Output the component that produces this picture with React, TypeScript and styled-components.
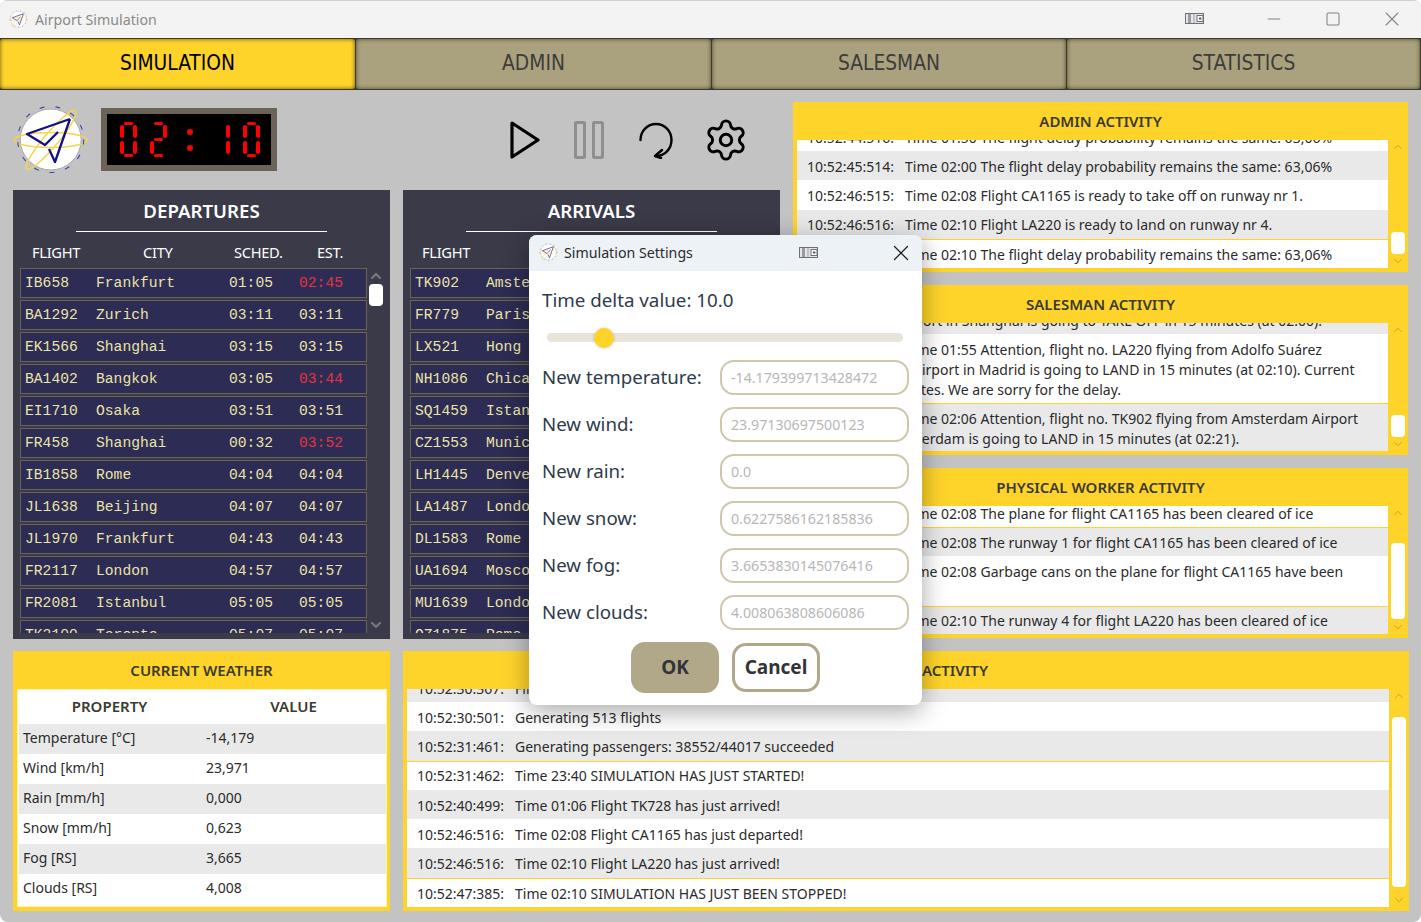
import * as React from 'react';
import styled, { createGlobalStyle } from 'styled-components';
import { ChevronUp, ChevronDown, Settings, X, Minus, Square } from 'lucide-react';

const YELLOW = '#ffd42a';
const TAN = '#aaa27e';
const UI_FONT = '"Noto Sans", "Open Sans", sans-serif';

const GlobalStyle = createGlobalStyle`
  html, body {
    margin: 0;
    padding: 0;
    background: #fff;
    font-family: ${UI_FONT};
  }
`;

const Page = styled.div`
  position: relative;
  width: 1421px;
  height: 922px;
  overflow: hidden;
  box-sizing: border-box;
  background: #c3c3c3;
  border-radius: 8px;
  display: flex;
  flex-direction: column;
`;

/* title bar */
const TitleBar = styled.div`
  height: 38px;
  flex: none;
  display: flex;
  align-items: center;
  background: #f3f3f3;
  border-top: 1px solid #cfcfcf;
  box-sizing: border-box;
  padding: 0 0 1px 8px;
  color: #8a8a8a;
  font-size: 14.2px;
`;
const TitleText = styled.span`
  margin-left: 4px;
  flex: 1;
`;
const WindowButton = styled.span<{ $gap?: number }>`
  width: 59px;
  margin-right: ${p => p.$gap || 0}px;
  display: flex;
  justify-content: center;
  align-items: center;
  color: #858585;
`;

/* tabs */
const TabBar = styled.div`
  height: 52px;
  flex: none;
  display: grid;
  grid-template-columns: 356px 356px 355px 354px;
  background: #3d3a2c;
`;
const Tab = styled.div<{ $active?: boolean }>`
  display: flex;
  align-items: center;
  justify-content: center;
  margin: 1px 1px 1px 0;
  padding-bottom: 3px;
  font-family: "DejaVu Sans Condensed", "DejaVu Sans", sans-serif;
  font-stretch: condensed;
  font-size: 20.8px;
  border-radius: 3px;
  color: ${p => (p.$active ? '#000' : '#3c3c3c')};
  background: ${p => (p.$active ? YELLOW : TAN)};
  box-shadow: inset 0 0 4px rgba(40, 36, 20, 0.75);
`;

/* main layout */
const Content = styled.div`
  flex: 1;
  min-height: 0;
  display: flex;
  flex-direction: column;
  gap: 12px;
  padding: 12px 12px 11px 13px;
`;
const TopSection = styled.div`
  height: 537px;
  flex: none;
  display: flex;
  gap: 13px;
`;
const LeftColumn = styled.div`
  width: 767px;
  flex: none;
  display: flex;
  flex-direction: column;
`;
const RightColumn = styled.div`
  flex: 1;
  min-width: 0;
  margin-right: 1px;
  display: grid;
  grid-template-rows: repeat(3, 170px);
  grid-template-columns: minmax(0, 1fr);
  gap: 13px;
`;
const BottomSection = styled.div`
  flex: 1;
  min-height: 0;
  display: flex;
  gap: 13px;
`;

/* toolbar */
const Toolbar = styled.div`
  height: 88px;
  flex: none;
  display: flex;
  align-items: flex-start;
  padding-top: 6px;
  box-sizing: border-box;
`;
const ToolbarLogo = styled.div`
  margin: -8px 1px 0 -3px;
  display: flex;
`;
const Clock = styled.div`
  width: 176px;
  height: 63px;
  box-sizing: border-box;
  border: 6px solid #6b6357;
  background: #000;
  display: flex;
  align-items: center;
  padding-left: 13px;
  gap: 13px;
`;
const DigitGrid = styled.div`
  width: 17px;
  height: 35px;
  display: grid;
  grid-template-columns: 4px 9px 4px;
  grid-template-rows: 3px 13px 3px 13px 3px;
`;
const Segment = styled.i<{ $area: string }>`
  grid-area: ${p => p.$area};
  background: #ff0000;
  border-radius: 2px;
`;
const ClockColon = styled.div`
  width: 20px;
  height: 22px;
  display: flex;
  flex-direction: column;
  justify-content: space-between;
  align-items: center;
`;
const ClockDot = styled.i`
  width: 6px;
  height: 6px;
  border-radius: 50%;
  background: #ff0000;
`;
const Controls = styled.div`
  margin-left: 233px;
  margin-top: 10px;
  display: flex;
  align-items: center;
  gap: 34px;
`;
const ControlButton = styled.div<{ $width: number; $faded?: boolean }>`
  width: ${p => p.$width}px;
  height: 44px;
  display: flex;
  align-items: center;
  justify-content: center;
  color: ${p => (p.$faded ? '#8f8f8f' : '#000')};
`;

/* boards */
const Boards = styled.div`
  flex: 1;
  min-height: 0;
  display: flex;
  gap: 13px;
`;
const Board = styled.section`
  width: 377px;
  flex: none;
  height: 449px;
  background: #3a3a48;
  color: #fff;
  display: flex;
  flex-direction: column;
  overflow: hidden;
`;
const BoardTitle = styled.h2`
  margin: 0 auto;
  width: 251px;
  height: 42px;
  box-sizing: border-box;
  border-bottom: 1px solid #fff;
  text-align: center;
  font-size: 18.67px;
  font-weight: 600;
  line-height: 42px;
`;
const BoardHeader = styled.div`
  height: 36px;
  flex: none;
  box-sizing: border-box;
  padding: 4px 0 0 19px;
  display: grid;
  grid-template-columns: 111px 91px 83px 1fr;
  align-items: center;
  font-size: 14.67px;
  letter-spacing: -0.3px;
`;
const BoardBody = styled.div`
  flex: 1;
  min-height: 0;
  display: flex;
  padding: 0 7px 6px 7px;
`;
const FlightList = styled.div`
  width: 347px;
  flex: none;
  overflow: hidden;
  display: flex;
  flex-direction: column;
  gap: 2px;
`;
const FlightRow = styled.div`
  height: 30px;
  flex: none;
  box-sizing: border-box;
  border: 1px solid #6a6450;
  background: #2c2c54;
  display: grid;
  grid-template-columns: 71px 133px 70px 1fr;
  align-items: center;
  padding-left: 4px;
  font-family: "Liberation Mono", monospace;
  font-size: 14.67px;
  color: #ece3a6;
  white-space: nowrap;
`;
const LateTime = styled.span`
  color: #e8343f;
`;

/* activity panels */
const Panel = styled.section<{ $width?: number }>`
  background: ${YELLOW};
  box-sizing: border-box;
  display: flex;
  flex-direction: column;
  padding: 0 0 4px 4px;
  min-height: 0;
  min-width: 0;
  ${p => (p.$width ? `width: ${p.$width}px; flex: none;` : 'flex: 1;')}
`;
const PanelTitle = styled.h3`
  margin: 0 4px 0 0;
  height: 38px;
  flex: none;
  text-align: center;
  line-height: 38px;
  font-size: 15px;
  font-weight: 600;
  color: #3a3a30;
`;
const PanelBody = styled.div`
  flex: 1;
  min-height: 0;
  display: flex;
`;
const LogList = styled.div<{ $shift: number }>`
  flex: 1;
  min-width: 0;
  overflow: hidden;
  background: #fff;
  & > :first-child {
    margin-top: ${p => -p.$shift}px;
  }
`;
const LogRow = styled.div<{ $alt?: boolean; $mark?: boolean }>`
  display: grid;
  grid-template-columns: 98px 1fr;
  padding: 4.8px 0 3.5px 10px;
  background: ${p => (p.$alt ? '#e9e9e9' : '#fff')};
  border-top: 1px solid ${p => (p.$mark ? YELLOW : 'transparent')};
  font-size: 14px;
  line-height: 20px;
  color: #2b2b2b;
  white-space: nowrap;
`;
const LogLine = styled.span<{ $indent?: number }>`
  display: block;
  margin-left: ${p => p.$indent || 0}px;
`;

/* scroll bars */
const Rail = styled.div<{ $dark?: boolean }>`
  width: 20px;
  flex: none;
  display: flex;
  flex-direction: column;
  align-items: center;
  color: ${p => (p.$dark ? '#77777c' : '#bd9f35')};
  ${p => (p.$dark ? 'margin-left: -1px;' : '')}
`;
const Track = styled.div`
  flex: 1;
  min-height: 0;
  width: 14px;
`;
const Thumb = styled.div<{ $top: number; $height: number }>`
  margin-top: ${p => p.$top}px;
  height: ${p => p.$height}px;
  background: #fff;
  border-radius: 4px;
`;

/* weather table */
const WeatherBox = styled.div`
  flex: 1;
  margin-right: 3px;
  background: #fff;
  border: 1px solid #fff2b8;
  display: flex;
  flex-direction: column;
  min-height: 0;
`;
const WeatherHead = styled.div`
  height: 34px;
  flex: none;
  box-sizing: border-box;
  padding-bottom: 2px;
  display: grid;
  grid-template-columns: 183px 1fr;
  align-items: center;
  text-align: center;
  font-size: 15px;
  font-weight: 600;
  color: #3a3a30;
`;
const WeatherRow = styled.div<{ $alt?: boolean }>`
  height: 30px;
  flex: none;
  box-sizing: border-box;
  margin-left: 1px;
  padding: 0 0 4px 4px;
  display: grid;
  grid-template-columns: 183px 1fr;
  align-items: center;
  background: ${p => (p.$alt ? '#e9e9e9' : '#fff')};
  font-size: 14px;
  color: #2b2b2b;
`;

/* settings dialog */
const Dialog = styled.div`
  position: absolute;
  left: 529px;
  top: 235px;
  width: 393px;
  height: 470px;
  background: #fff;
  border-radius: 8px;
  box-shadow: 0 6px 26px rgba(0, 0, 0, 0.35);
  display: flex;
  flex-direction: column;
  overflow: hidden;
`;
const DialogBar = styled.div`
  height: 36px;
  flex: none;
  box-sizing: border-box;
  display: flex;
  align-items: center;
  padding: 0 8px 1px 9px;
  background: #edf2f7;
  font-size: 14.2px;
  color: #2b2b2b;
`;
const DialogTitle = styled.span`
  margin-left: 3px;
  width: 235px;
`;
const DialogClose = styled.span`
  margin-left: auto;
  display: flex;
  color: #222;
`;
const DialogBody = styled.div`
  flex: 1;
  display: flex;
  flex-direction: column;
  padding: 16px 13px 0;
  color: #2f3b4c;
`;
const DeltaLabel = styled.div`
  height: 26px;
  line-height: 26px;
  font-size: 18.75px;
`;
const Slider = styled.div`
  margin: 20px 6px 18px 5px;
  height: 9px;
  border-radius: 5px;
  background: #e8e4da;
  display: flex;
  align-items: center;
`;
const SliderThumb = styled.i<{ $offset: number }>`
  margin-left: ${p => p.$offset}px;
  width: 20px;
  height: 20px;
  border-radius: 50%;
  background: ${YELLOW};
  box-shadow: 0 0 3px rgba(0, 0, 0, 0.2);
`;
const FieldList = styled.div`
  display: flex;
  flex-direction: column;
  gap: 12px;
`;
const FieldRow = styled.label`
  display: grid;
  grid-template-columns: 178px 189px;
  align-items: center;
  font-size: 18.7px;
`;
const FieldName = styled.span`
  padding-bottom: 2px;
`;
const FieldInput = styled.input`
  height: 35px;
  width: 100%;
  box-sizing: border-box;
  border: 2px solid #cfc7ad;
  border-radius: 14px;
  padding: 0 9px;
  font-family: ${UI_FONT};
  font-size: 14.2px;
  background: #fff;
  &::placeholder {
    color: #b7b7b7;
    opacity: 1;
  }
`;
const DialogButtons = styled.div`
  margin-top: 12px;
  display: flex;
  justify-content: center;
  gap: 13px;
  align-items: center;
`;
const DialogButton = styled.button<{ $primary?: boolean }>`
  width: 88px;
  height: ${p => (p.$primary ? 51 : 49)}px;
  box-sizing: border-box;
  border-radius: 14px;
  border: 3px solid #b0a888;
  background: ${p => (p.$primary ? '#b0a888' : '#fff')};
  color: #333338;
  font-family: ${UI_FONT};
  font-size: 19px;
  font-weight: 700;
  padding: 0 0 2px;
`;

const SEGMENTS: Record<string, string[]> = {
  '0': ['t', 'tl', 'tr', 'bl', 'br', 'b'],
  '1': ['tr', 'br'],
  '2': ['t', 'tr', 'm', 'bl', 'b'],
};
const SEGMENT_AREAS: Record<string, string> = {
  t: '1 / 2 / 2 / 3',
  tl: '2 / 1 / 3 / 2',
  tr: '2 / 3 / 3 / 4',
  m: '3 / 2 / 4 / 3',
  bl: '4 / 1 / 5 / 2',
  br: '4 / 3 / 5 / 4',
  b: '5 / 2 / 6 / 3',
};

const Digit = ({ value }: { value: string }) => (
  <DigitGrid>
    {SEGMENTS[value].map(s => <Segment key={s} $area={SEGMENT_AREAS[s]} />)}
  </DigitGrid>
);

const Logo = ({ size }: { size: number }) => (
  <svg width={size} height={size * 80 / 90} viewBox="0 0 90 80" fill="none">
    <circle cx="40.7" cy="39.5" r="30.5" fill="#fff" stroke="#a8a8a8" strokeWidth="1" />
    <ellipse cx="40.7" cy="40" rx="36.5" ry="7.5" stroke="#f6d545" strokeWidth="1.4" />
    <ellipse cx="41" cy="40" rx="38" ry="7" stroke="#f6d545" strokeWidth="1.4" transform="rotate(-50 41 40)" />
    <circle cx="40.7" cy="39.5" r="33" stroke="#3a44a8" strokeWidth="1.1" strokeDasharray="5 11" />
    <path d="M60 19 L17 34 L35 45 L48 32 M39 49 L45 62 L60 19" stroke="#10108c" strokeWidth="2.3" strokeLinejoin="round" />
  </svg>
);

const PinIcon = () => (
  <svg width="20" height="12" viewBox="0 0 20 12" fill="none">
    <rect x="0.5" y="0.5" width="18" height="10" fill="#e6e6e6" stroke="#6f6f78" />
    <rect x="3" y="1" width="3" height="9" fill="#9a9aa4" />
    <rect x="8" y="1" width="2" height="9" fill="#c0c0c8" />
    <rect x="12" y="2.5" width="6" height="6" fill="#fff" stroke="#6f6f78" />
    <rect x="14" y="4.5" width="2.4" height="2" fill="#555" />
  </svg>
);

const ScrollRail = ({ top, height, dark }: { top: number; height: number; dark?: boolean }) => (
  <Rail $dark={dark}>
    <ChevronUp size={dark ? 16 : 14} strokeWidth={dark ? 3.4 : 1.6} />
    <Track><Thumb $top={top} $height={height} /></Track>
    <ChevronDown size={dark ? 16 : 14} strokeWidth={dark ? 3.4 : 1.6} />
  </Rail>
);

type Flight = [string, string, string, string, boolean?];

const departures: Flight[] = [
  ['IB658', 'Frankfurt', '01:05', '02:45', true],
  ['BA1292', 'Zurich', '03:11', '03:11'],
  ['EK1566', 'Shanghai', '03:15', '03:15'],
  ['BA1402', 'Bangkok', '03:05', '03:44', true],
  ['EI1710', 'Osaka', '03:51', '03:51'],
  ['FR458', 'Shanghai', '00:32', '03:52', true],
  ['IB1858', 'Rome', '04:04', '04:04'],
  ['JL1638', 'Beijing', '04:07', '04:07'],
  ['JL1970', 'Frankfurt', '04:43', '04:43'],
  ['FR2117', 'London', '04:57', '04:57'],
  ['FR2081', 'Istanbul', '05:05', '05:05'],
  ['TK2100', 'Toronto', '05:07', '05:07'],
];

const arrivals: Flight[] = [
  ['TK902', 'Amsterdam', '02:21', '02:21'],
  ['FR779', 'Paris', '02:24', '02:24'],
  ['LX521', 'Hong Kong', '02:33', '02:33'],
  ['NH1086', 'Chicago', '02:38', '02:38'],
  ['SQ1459', 'Istanbul', '02:45', '02:45'],
  ['CZ1553', 'Munich', '02:52', '02:52'],
  ['LH1445', 'Denver', '03:02', '03:02'],
  ['LA1487', 'London', '03:08', '03:08'],
  ['DL1583', 'Rome', '03:17', '03:17'],
  ['UA1694', 'Moscow', '03:24', '03:24'],
  ['MU1639', 'London', '03:31', '03:31'],
  ['OZ1875', 'Rome', '03:40', '03:40'],
];

const weather = [
  ['Temperature [°C]', '-14,179'],
  ['Wind [km/h]', '23,971'],
  ['Rain [mm/h]', '0,000'],
  ['Snow [mm/h]', '0,623'],
  ['Fog [RS]', '3,665'],
  ['Clouds [RS]', '4,008'],
];

const fields = [
  ['New temperature:', '-14.179399713428472'],
  ['New wind:', '23.97130697500123'],
  ['New rain:', '0.0'],
  ['New snow:', '0.6227586162185836'],
  ['New fog:', '3.6653830145076416'],
  ['New clouds:', '4.008063808606086'],
];

type LogEntry = { time: string; lines: string[]; indents?: number[]; alt?: boolean; mark?: boolean };

const adminLog: LogEntry[] = [
  { time: '10:52:44:516:', lines: ['Time 01:50 The flight delay probability remains the same: 63,06%'] },
  { time: '10:52:45:514:', lines: ['Time 02:00 The flight delay probability remains the same: 63,06%'], alt: true },
  { time: '10:52:46:515:', lines: ['Time 02:08 Flight CA1165 is ready to take off on runway nr 1.'] },
  { time: '10:52:46:516:', lines: ['Time 02:10 Flight LA220 is ready to land on runway nr 4.'], alt: true },
  { time: '10:52:47:385:', lines: ['Time 02:10 The flight delay probability remains the same: 63,06%'], mark: true },
];

// wrapped lines sit partly under the dialog, indents keep the visible part where it is in the picture
const salesLog: LogEntry[] = [
  {
    time: '10:52:44:210:',
    lines: ['Time 01:45 Attention, flight no. CZ1553 flying from Munich', 'Airport in Shanghai is going to TAKE OFF in 15 minutes (at 02:00).'],
    indents: [0, -9],
    alt: true,
  },
  {
    time: '10:52:45:120:',
    lines: [
      'Time 01:55 Attention, flight no. LA220 flying from Adolfo Suárez',
      'Airport in Madrid is going to LAND in 15 minutes (at 02:10). Current',
      'minutes. We are sorry for the delay.',
    ],
    indents: [0, 8, -18],
  },
  {
    time: '10:52:46:020:',
    lines: ['Time 02:06 Attention, flight no. TK902 flying from Amsterdam Airport', 'Amsterdam is going to LAND in 15 minutes (at 02:21).'],
    indents: [0, -17],
    alt: true,
    mark: true,
  },
];

const workerLog: LogEntry[] = [
  { time: '10:52:46:515:', lines: ['Time 02:08 The plane for flight CA1165 has been cleared of ice'] },
  { time: '10:52:46:515:', lines: ['Time 02:08 The runway 1 for flight CA1165 has been cleared of ice'], alt: true, mark: true },
  { time: '10:52:46:515:', lines: ['Time 02:08 Garbage cans on the plane for flight CA1165 have been', 'emptied'], indents: [0, -40] },
  { time: '10:52:46:516:', lines: ['Time 02:10 The runway 4 for flight LA220 has been cleared of ice'], alt: true, mark: true },
];

const simLog: LogEntry[] = [
  { time: '10:52:30:367:', lines: ['Flights loaded'], alt: true },
  { time: '10:52:30:501:', lines: ['Generating 513 flights'] },
  { time: '10:52:31:461:', lines: ['Generating passengers: 38552/44017 succeeded'], alt: true },
  { time: '10:52:31:462:', lines: ['Time 23:40 SIMULATION HAS JUST STARTED!'], mark: true },
  { time: '10:52:40:499:', lines: ['Time 01:06 Flight TK728 has just arrived!'], alt: true },
  { time: '10:52:46:516:', lines: ['Time 02:08 Flight CA1165 has just departed!'] },
  { time: '10:52:46:516:', lines: ['Time 02:10 Flight LA220 has just arrived!'], alt: true },
  { time: '10:52:47:385:', lines: ['Time 02:10 SIMULATION HAS JUST BEEN STOPPED!'], mark: true },
];

const LogPanel = ({ title, entries, shift, thumbTop, thumbHeight }: {
  title: string; entries: LogEntry[]; shift: number; thumbTop: number; thumbHeight: number;
}) => (
  <Panel>
    <PanelTitle>{title}</PanelTitle>
    <PanelBody>
      <LogList $shift={shift}>
        {entries.map((e, i) => (
          <LogRow key={i} $alt={e.alt} $mark={e.mark}>
            <span>{e.time}</span>
            <span>
              {e.lines.map((l, j) => <LogLine key={j} $indent={e.indents ? e.indents[j] : 0}>{l}</LogLine>)}
            </span>
          </LogRow>
        ))}
      </LogList>
      <ScrollRail top={thumbTop} height={thumbHeight} />
    </PanelBody>
  </Panel>
);

const FlightBoard = ({ title, flights }: { title: string; flights: Flight[] }) => (
  <Board>
    <BoardTitle>{title}</BoardTitle>
    <BoardHeader>
      <span>FLIGHT</span>
      <span>CITY</span>
      <span>SCHED.</span>
      <span>EST.</span>
    </BoardHeader>
    <BoardBody>
      <FlightList>
        {flights.map(f => (
          <FlightRow key={f[0]}>
            <span>{f[0]}</span>
            <span>{f[1]}</span>
            <span>{f[2]}</span>
            {f[4] ? <LateTime>{f[3]}</LateTime> : <span>{f[3]}</span>}
          </FlightRow>
        ))}
      </FlightList>
      <ScrollRail top={0} height={22} dark />
    </BoardBody>
  </Board>
);

const App = () => (
  <Page>
    <GlobalStyle />
    <TitleBar>
      <Logo size={23} />
      <TitleText>Airport Simulation</TitleText>
      <WindowButton $gap={20}><PinIcon /></WindowButton>
      <WindowButton><Minus size={20} strokeWidth={1.2} /></WindowButton>
      <WindowButton><Square size={16} strokeWidth={1.6} /></WindowButton>
      <WindowButton><X size={24} strokeWidth={1.1} /></WindowButton>
    </TitleBar>
    <TabBar>
      <Tab $active>SIMULATION</Tab>
      <Tab>ADMIN</Tab>
      <Tab>SALESMAN</Tab>
      <Tab>STATISTICS</Tab>
    </TabBar>
    <Content>
      <TopSection>
        <LeftColumn>
          <Toolbar>
            <ToolbarLogo><Logo size={90} /></ToolbarLogo>
            <Clock>
              <Digit value="0" />
              <Digit value="2" />
              <ClockColon><ClockDot /><ClockDot /></ClockColon>
              <Digit value="1" />
              <Digit value="0" />
            </Clock>
            <Controls>
              <ControlButton $width={30}>
                <svg width="30" height="38" viewBox="0 0 30 38" fill="none">
                  <path d="M2 2 L28 19 L2 36 Z" stroke="currentColor" strokeWidth="3.2" strokeLinejoin="round" />
                </svg>
              </ControlButton>
              <ControlButton $width={30} $faded>
                <svg width="30" height="38" viewBox="0 0 30 38" fill="none">
                  <rect x="1.5" y="1.5" width="9" height="35" stroke="currentColor" strokeWidth="3" rx="1" />
                  <rect x="19.5" y="1.5" width="9" height="35" stroke="currentColor" strokeWidth="3" rx="1" />
                </svg>
              </ControlButton>
              <ControlButton $width={36}>
                <svg width="36" height="38" viewBox="0 0 36 38" fill="none">
                  <path d="M2.5 19 A15.5 16 0 1 1 18 35" stroke="currentColor" strokeWidth="2.4" strokeLinecap="round" />
                  <path d="M24 29 L17 35 L23 37" stroke="currentColor" strokeWidth="2.4" strokeLinecap="round" strokeLinejoin="round" />
                </svg>
              </ControlButton>
              <ControlButton $width={36}>
                <Settings size={46} strokeWidth={1.55} style={{ flex: 'none' }} />
              </ControlButton>
            </Controls>
          </Toolbar>
          <Boards>
            <FlightBoard title="DEPARTURES" flights={departures} />
            <FlightBoard title="ARRIVALS" flights={arrivals} />
          </Boards>
        </LeftColumn>
        <RightColumn>
          <LogPanel title="ADMIN ACTIVITY" entries={adminLog} shift={18.3} thumbTop={78} thumbHeight={22} />
          <LogPanel title="SALESMAN ACTIVITY" entries={salesLog} shift={38.3} thumbTop={78} thumbHeight={22} />
          <LogPanel title="PHYSICAL WORKER ACTIVITY" entries={workerLog} shift={8.3} thumbTop={23} thumbHeight={76} />
        </RightColumn>
      </TopSection>
      <BottomSection>
        <Panel $width={377}>
          <PanelTitle>CURRENT WEATHER</PanelTitle>
          <WeatherBox>
            <WeatherHead><span>PROPERTY</span><span>VALUE</span></WeatherHead>
            {weather.map((w, i) => (
              <WeatherRow key={w[0]} $alt={i % 2 === 0}>
                <span>{w[0]}</span>
                <span>{w[1]}</span>
              </WeatherRow>
            ))}
          </WeatherBox>
        </Panel>
        <LogPanel title="SIMULATION ACTIVITY" entries={simLog} shift={16.3} thumbTop={14} thumbHeight={170} />
      </BottomSection>
    </Content>
    <Dialog>
      <DialogBar>
        <Logo size={23} />
        <DialogTitle>Simulation Settings</DialogTitle>
        <PinIcon />
        <DialogClose><X size={26} strokeWidth={1.2} /></DialogClose>
      </DialogBar>
      <DialogBody>
        <DeltaLabel>Time delta value: 10.0</DeltaLabel>
        <Slider><SliderThumb $offset={47} /></Slider>
        <FieldList>
          {fields.map(f => (
            <FieldRow key={f[0]}>
              <FieldName>{f[0]}</FieldName>
              <FieldInput placeholder={f[1]} />
            </FieldRow>
          ))}
        </FieldList>
        <DialogButtons>
          <DialogButton $primary>OK</DialogButton>
          <DialogButton>Cancel</DialogButton>
        </DialogButtons>
      </DialogBody>
    </Dialog>
  </Page>
);

export default App;
